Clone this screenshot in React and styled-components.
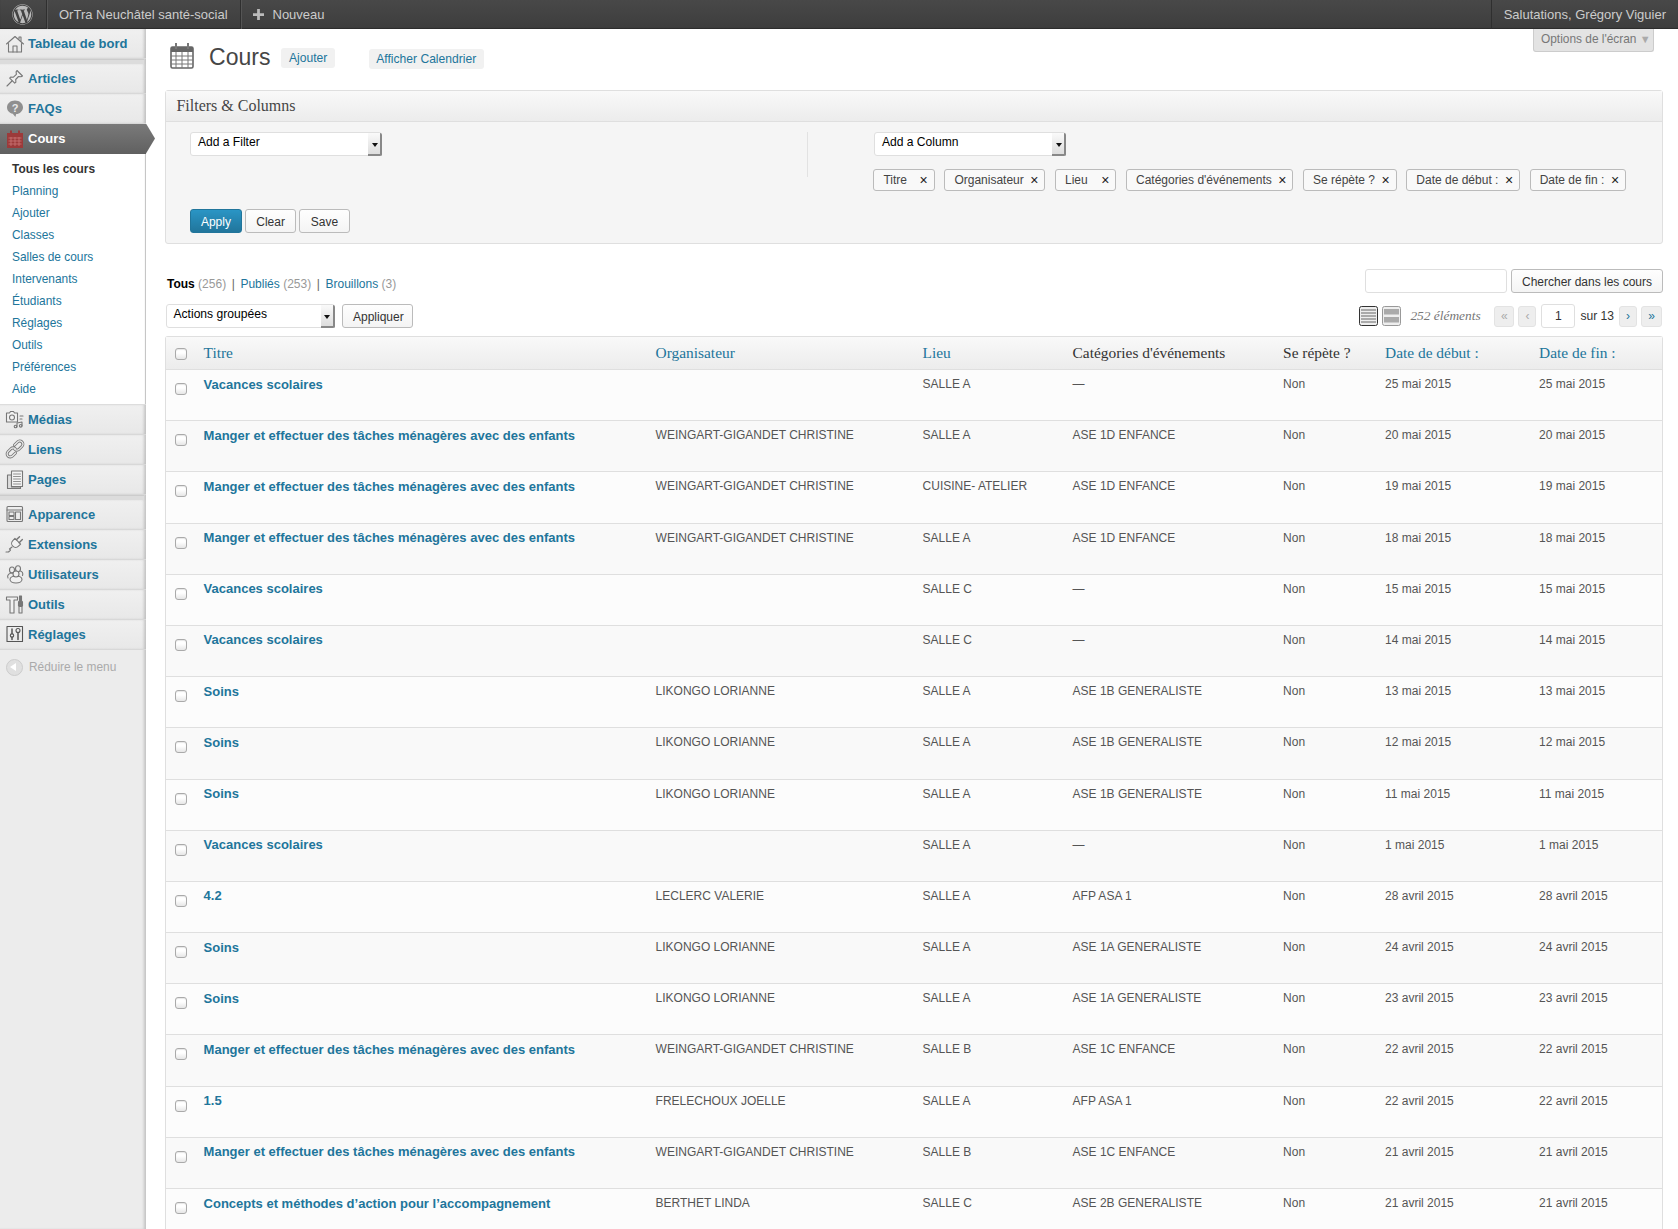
import React from "react";
import styled, { createGlobalStyle } from "styled-components";
import { FaWordpress } from "react-icons/fa";

const SANS = `"Liberation Sans", Arial, sans-serif`;
const SERIF = `"Liberation Serif", Georgia, serif`;
const LINK = "#21759b";

const stroke = { fill: "none", stroke: "#777", strokeWidth: 1.1, strokeLinejoin: "round", strokeLinecap: "round" };

// Menu icons, drawn by hand
const HomeIcon = () => (
  <svg width="20" height="20" viewBox="0 0 20 20">
    <g {...stroke}>
      <path d="M1.5 10 10 2.5l8.5 7.5" />
      <path d="M3.5 9.5v8.5h13V9.5" />
      <path d="M8 18v-6h4v6" />
      <path d="M14 5V3h2v4" />
    </g>
  </svg>
);
const PinIcon = () => (
  <svg width="20" height="20" viewBox="0 0 20 20">
    <g {...stroke}>
      <path d="M12 2.5 17.5 8l-1.5.8-2.5-.3-2.8 3 .2 2.7-1.2 1-5-5 1-1.2 2.7.2 3-2.8-.3-2.5z" fill="#eee" />
      <path d="M7 13 2 18" />
    </g>
  </svg>
);
const FaqIcon = () => (
  <svg width="20" height="20" viewBox="0 0 20 20">
    <path d="M10 2.500c4.400 0 8 2.900 8 6.800s-3.400 6.800-6.800 6.800l-.8 3-2.600-3.300C4.500 15.300 2 12.700 2 9.300c0-3.900 3.600-6.800 8-6.800z" fill="#8f8f8f" />
    <text x="10" y="13.500" textAnchor="middle" fontSize="11" fontWeight="700" fontFamily={SANS} fill="#e9e9e9">?</text>
  </svg>
);
const EventIcon = () => (
  <svg width="20" height="20" viewBox="0 0 20 20">
    <rect x="2" y="4" width="16" height="15" fill="#9c3a3a" />
    <rect x="5" y="1.500" width="2" height="4" fill="#9c3a3a" />
    <rect x="13" y="1.500" width="2" height="4" fill="#9c3a3a" />
    <path d="M3.500 9h13M3.500 12h13M3.500 15h13M6 8v9M10 8v9M14 8v9" stroke="#c77" strokeWidth=".8" fill="none" />
  </svg>
);
const MediaIcon = () => (
  <svg width="20" height="20" viewBox="0 0 20 20">
    <g {...stroke}>
      <path d="M1.500 4h3l1-1.500h3L9.500 4h3v9h-11z" fill="#f2f2f2" />
      <circle cx="7" cy="8.500" r="2.500" />
      <path d="M15 7h3M15 10h2M12 18v-4l5-1v4" />
      <circle cx="10.500" cy="17.500" r="1.300" />
      <circle cx="15.700" cy="16.800" r="1.300" />
    </g>
  </svg>
);
const CHAIN = "M9.500 6 12.500 3a3 3 0 0 1 4.500 4.300l-3 3a3 3 0 0 1-4.300 0M10.500 14 7.500 17A3 3 0 0 1 3 12.700l3-3a3 3 0 0 1 4.300 0";
const LinkIcon = () => (
  <svg width="20" height="20" viewBox="0 0 20 20">
    <path d={CHAIN} fill="none" stroke="#777" strokeWidth="3" strokeLinecap="round" />
    <path d={CHAIN} fill="none" stroke="#eee" strokeWidth="1.200" strokeLinecap="round" />
  </svg>
);
const PagesIcon = () => (
  <svg width="20" height="20" viewBox="0 0 20 20">
    <g {...stroke}>
      <path d="M2.500 6h4v12h9v1.500h-13z" fill="#ddd" />
      <rect x="6.500" y="2" width="11" height="15.500" fill="#f4f4f4" />
      <path d="M8.500 5h7M8.500 7.500h7M8.500 10h7M8.500 12.500h7M8.500 15h7" strokeWidth=".8" />
    </g>
  </svg>
);
const AppearanceIcon = () => (
  <svg width="20" height="20" viewBox="0 0 20 20">
    <g {...stroke}>
      <rect x="2" y="2.500" width="15.500" height="15" rx="1" />
      <path d="M2 6h15.500" />
      <rect x="4" y="8" width="5" height="3.500" />
      <rect x="4" y="12.500" width="5" height="3" />
      <rect x="10.500" y="8" width="5" height="7.500" />
    </g>
  </svg>
);
const PluginIcon = () => (
  <svg width="20" height="20" viewBox="0 0 20 20">
    <g {...stroke}>
      <g transform="rotate(45 11 9)">
        <path d="M7 6.500h8v3a4 4 0 0 1-8 0z" fill="#f2f2f2" />
        <path d="M9 6.500V2M13 6.500V2" strokeWidth="1.400" />
      </g>
      <path d="M7 13 4.500 15l1 1-2 2H1" />
    </g>
  </svg>
);
const UsersIcon = () => (
  <svg width="20" height="20" viewBox="0 0 20 20">
    <g {...stroke}>
      <ellipse cx="7" cy="6" rx="2.500" ry="3" />
      <ellipse cx="13" cy="4.800" rx="2.500" ry="3" />
      <path d="M3 14c-1.500-3 1.500-5 4-5s3 1 3 1" />
      <path d="M15.500 7c1.500.5 3 2 2 4.500" />
      <ellipse cx="11" cy="15.500" rx="6" ry="3.500" fill="#f0f0f0" />
      <ellipse cx="11" cy="10" rx="3" ry="3" fill="#f0f0f0" />
    </g>
  </svg>
);
const ToolsIcon = () => (
  <svg width="20" height="20" viewBox="0 0 20 20">
    <g {...stroke}>
      <path d="M1.500 3h11v3h-3.500v13h-4V6H1.500z" fill="#f0f0f0" />
      <path d="M14.500 2h2v5l1 1v4h-4V8l1-1z" fill="#777" />
      <path d="M14 12.500h3v6.500h-3z" />
    </g>
  </svg>
);
const SettingsIcon = () => (
  <svg width="20" height="20" viewBox="0 0 20 20">
    <g {...stroke} stroke="#555">
      <rect x="2" y="2.500" width="15.500" height="15" />
      <path d="M7 5v5M7 13v2.500M13 9v6.500" strokeWidth="1.500" />
      <circle cx="7" cy="11.500" r="1.700" />
      <circle cx="13" cy="6.500" r="2" />
    </g>
  </svg>
);

const CalendarIcon = () => (
  <svg width="24" height="26" viewBox="0 0 24 26">
    <rect x="1" y="4" width="22" height="21" rx="1.500" fill="#fff" stroke="#666" strokeWidth="1.600" />
    <rect x="1" y="4" width="22" height="5" fill="#666" />
    <rect x="5" y="0" width="2" height="6" fill="#777" />
    <rect x="17" y="0" width="2" height="6" fill="#777" />
    <path d="M1 13h22M1 17h22M1 21h22M6 9v16M12 9v16M18 9v16" stroke="#777" strokeWidth="1" />
  </svg>
);

const ListViewIcon = () => (
  <svg width="19" height="20" viewBox="0 0 19 20">
    <rect x=".5" y=".5" width="18" height="19" rx="2" fill="#eee" stroke="#333" />
    <path d="M2 4h15M2 7h15M2 10h15M2 13h15M2 16h15" stroke="#666" strokeWidth="1.200" />
  </svg>
);
const ExcerptViewIcon = () => (
  <svg width="19" height="20" viewBox="0 0 19 20">
    <rect x=".5" y=".5" width="18" height="19" rx="2" fill="#eee" stroke="#999" />
    <rect x="2" y="3" width="15" height="5.500" fill="#aaa" />
    <rect x="2" y="11" width="15" height="5.500" fill="#aaa" />
  </svg>
);

const menuTop = [{ label: "Tableau de bord", Icon: HomeIcon }];
const menuContent = [
  { label: "Articles", Icon: PinIcon },
  { label: "FAQs", Icon: FaqIcon },
];
const subLinks = ["Planning", "Ajouter", "Classes", "Salles de cours", "Intervenants", "Étudiants", "Réglages", "Outils", "Préférences", "Aide"];
const menuMiddle = [
  { label: "Médias", Icon: MediaIcon },
  { label: "Liens", Icon: LinkIcon },
  { label: "Pages", Icon: PagesIcon },
];
const menuBottom = [
  { label: "Apparence", Icon: AppearanceIcon },
  { label: "Extensions", Icon: PluginIcon },
  { label: "Utilisateurs", Icon: UsersIcon },
  { label: "Outils", Icon: ToolsIcon },
  { label: "Réglages", Icon: SettingsIcon },
];

const tags = ["Titre", "Organisateur", "Lieu", "Catégories d'événements", "Se répète ?", "Date de début :", "Date de fin :"];

const MANGER = "Manger et effectuer des tâches ménagères avec des enfants";
const WEIN = "WEINGART-GIGANDET CHRISTINE";
const LIK = "LIKONGO LORIANNE";
const rows = [
  ["Vacances scolaires", "", "SALLE A", "—", "25 mai 2015"],
  [MANGER, WEIN, "SALLE A", "ASE 1D ENFANCE", "20 mai 2015"],
  [MANGER, WEIN, "CUISINE- ATELIER", "ASE 1D ENFANCE", "19 mai 2015"],
  [MANGER, WEIN, "SALLE A", "ASE 1D ENFANCE", "18 mai 2015"],
  ["Vacances scolaires", "", "SALLE C", "—", "15 mai 2015"],
  ["Vacances scolaires", "", "SALLE C", "—", "14 mai 2015"],
  ["Soins", LIK, "SALLE A", "ASE 1B GENERALISTE", "13 mai 2015"],
  ["Soins", LIK, "SALLE A", "ASE 1B GENERALISTE", "12 mai 2015"],
  ["Soins", LIK, "SALLE A", "ASE 1B GENERALISTE", "11 mai 2015"],
  ["Vacances scolaires", "", "SALLE A", "—", "1 mai 2015"],
  ["4.2", "LECLERC VALERIE", "SALLE A", "AFP ASA 1", "28 avril 2015"],
  ["Soins", LIK, "SALLE A", "ASE 1A GENERALISTE", "24 avril 2015"],
  ["Soins", LIK, "SALLE A", "ASE 1A GENERALISTE", "23 avril 2015"],
  [MANGER, WEIN, "SALLE B", "ASE 1C ENFANCE", "22 avril 2015"],
  ["1.5", "FRELECHOUX JOELLE", "SALLE A", "AFP ASA 1", "22 avril 2015"],
  [MANGER, WEIN, "SALLE B", "ASE 1C ENFANCE", "21 avril 2015"],
  ["Concepts et méthodes d’action pour l’accompagnement", "BERTHET LINDA", "SALLE C", "ASE 2B GENERALISTE", "21 avril 2015"],
];

function MenuGroup({ items }) {
  return items.map(({ label, Icon }) => (
    <MenuItem key={label}>
      <MenuIcon>
        <Icon />
      </MenuIcon>
      {label}
    </MenuItem>
  ));
}

function FakeSelect({ label, width }) {
  return (
    <SelectBox $width={width}>
      {label}
      <SelectArrow />
    </SelectBox>
  );
}

export default function App() {
  return (
    <>
      <GlobalStyle />
      <AdminBar>
        <BarItem $width={46.5} $center>
          <FaWordpress size={21} color="#bbb" />
        </BarItem>
        <BarItem $width={194}>OrTra Neuchâtel santé-social</BarItem>
        <BarItem>
          <svg width="11" height="11" viewBox="0 0 12 12">
            <path d="M4.500 0h3v4.500H12v3H7.500V12h-3V7.500H0v-3h4.500z" fill="#bbb" />
          </svg>
          <span>Nouveau</span>
        </BarItem>
        <BarSpacer />
        <BarAccount>Salutations, Grégory Viguier</BarAccount>
      </AdminBar>
      <Shell>
        <Sidebar>
          <MenuGroup items={menuTop} />
          <MenuSeparator />
          <MenuGroup items={menuContent} />
          <MenuItem $active>
            <MenuIcon>
              <EventIcon />
            </MenuIcon>
            Cours
          </MenuItem>
          <SubMenu>
            <SubLink $current>Tous les cours</SubLink>
            {subLinks.map((s) => (
              <SubLink key={s}>{s}</SubLink>
            ))}
          </SubMenu>
          <MenuGroup items={menuMiddle} />
          <MenuSeparator $tall />
          <MenuGroup items={menuBottom} />
          <Collapse>
            <CollapseDot />
            Réduire le menu
          </Collapse>
        </Sidebar>
        <Main>
          <ScreenOptions>
            Options de l'écran <small>▼</small>
          </ScreenOptions>
          <TitleRow>
            <TitleIcon>
              <CalendarIcon />
            </TitleIcon>
            <PageTitle>Cours</PageTitle>
            <AddNew>Ajouter</AddNew>
            <AddNew $wide>Afficher Calendrier</AddNew>
          </TitleRow>

          <Panel>
            <PanelHead>Filters &amp; Columns</PanelHead>
            <PanelBody>
              <FilterSide>
                <FakeSelect label="Add a Filter" width={192} />
              </FilterSide>
              <ColumnSide>
                <FakeSelect label="Add a Column" width={192} />
                <TagList>
                  {tags.map((t) => (
                    <Tag key={t}>
                      {t}
                      <TagClose>×</TagClose>
                    </Tag>
                  ))}
                </TagList>
              </ColumnSide>
              <PanelActions>
                <Button $primary>Apply</Button>
                <Button>Clear</Button>
                <Button>Save</Button>
              </PanelActions>
            </PanelBody>
          </Panel>

          <StatusBar>
            <Status>
              <b>Tous</b> <Count>(256)</Count>
              <Sep>|</Sep>
              <a>Publiés</a> <Count>(253)</Count>
              <Sep>|</Sep>
              <a>Brouillons</a> <Count>(3)</Count>
            </Status>
            <SearchBox>
              <SearchInput />
              <Button $search>Chercher dans les cours</Button>
            </SearchBox>
          </StatusBar>

          <ActionBar>
            <FakeSelect label="Actions groupées" width={169} />
            <Button $apply>Appliquer</Button>
            <Pager>
              <ListViewIcon />
              <ExcerptViewIcon />
              <ItemCount>252 éléments</ItemCount>
              <PageBtn $off $width={20}>«</PageBtn>
              <PageBtn $off $width={18}>‹</PageBtn>
              <PageInput defaultValue="1" />
              <PageOf>sur 13</PageOf>
              <PageBtn $width={18}>›</PageBtn>
              <PageBtn $width={21}>»</PageBtn>
            </Pager>
          </ActionBar>

          <Table>
            <HeadRow>
              <CheckCell $head>
                <Check type="checkbox" />
              </CheckCell>
              <HeadCell $link>Titre</HeadCell>
              <HeadCell $link>Organisateur</HeadCell>
              <HeadCell $link>Lieu</HeadCell>
              <HeadCell>Catégories d'événements</HeadCell>
              <HeadCell>Se répète ?</HeadCell>
              <HeadCell $link>Date de début :</HeadCell>
              <HeadCell $link>Date de fin :</HeadCell>
            </HeadRow>
            {rows.map(([title, org, place, cat, date], i) => (
              <Row key={i} $odd={i % 2 === 0}>
                <CheckCell>
                  <Check type="checkbox" />
                </CheckCell>
                <RowTitle>{title}</RowTitle>
                <Cell>{org}</Cell>
                <Cell>{place}</Cell>
                <Cell>{cat}</Cell>
                <Cell>Non</Cell>
                <Cell>{date}</Cell>
                <Cell>{date}</Cell>
              </Row>
            ))}
          </Table>
        </Main>
      </Shell>
    </>
  );
}

// Styles
const GlobalStyle = createGlobalStyle`
  html, body {
    margin: 0;
    height: 1229px;
    overflow: hidden;
    background: #fff;
    font-family: ${SANS};
    font-size: 12.85px;
    color: #333;
  }
`;

const AdminBar = styled.header`
  display: flex;
  height: 29px;
  background: linear-gradient(#484848, #3d3d3d);
  box-shadow: inset 0 -1px 1px rgba(0, 0, 0, 0.3);
  color: #ccc;
  font-size: 13px;
  white-space: nowrap;
`;

const BarItem = styled.div`
  display: flex;
  align-items: center;
  justify-content: ${(p) => (p.$center ? "center" : "flex-start")};
  width: ${(p) => (p.$width ? `${p.$width}px` : "auto")};
  box-sizing: border-box;
  padding: ${(p) => (p.$center ? "0" : "0 12.5px")};
  gap: 8.5px;
  border-right: 1px solid #2f2f2f;
  box-shadow: 1px 0 0 #555;

  &:nth-child(3) {
    border-right: 0;
    box-shadow: none;
  }
`;

const BarSpacer = styled.div`
  flex: 1;
`;

const BarAccount = styled.div`
  display: flex;
  align-items: center;
  padding: 0 12px;
  border-left: 1px solid #2f2f2f;
`;

const Shell = styled.div`
  display: flex;
  align-items: stretch;
  height: 1200px;
`;

const Sidebar = styled.aside`
  flex: 0 0 146px;
  width: 146px;
  background: #ececec;
  box-shadow: inset -3px 0 3px -1px rgba(0, 0, 0, 0.18);
`;

const MenuItem = styled.div`
  position: relative;
  display: flex;
  align-items: center;
  box-sizing: border-box;
  height: 30px;
  font-size: 13px;
  font-weight: 700;
  color: ${(p) => (p.$active ? "#fff" : LINK)};
  background: ${(p) => (p.$active ? "linear-gradient(#7a7a7a, #606060)" : "linear-gradient(#f0f0f0, #e8e8e8)")};
  border-bottom: ${(p) => (p.$active ? "0" : "1px solid #d8d8d8")};
  box-shadow: ${(p) => (p.$active ? "none" : "inset -3px 0 3px -1px rgba(0, 0, 0, 0.18)")};

  ${(p) =>
    p.$active &&
    `&::after {
      content: "";
      position: absolute;
      left: 146px;
      top: 0;
      width: 9px;
      height: 30px;
      background: linear-gradient(#7a7a7a, #606060);
      clip-path: polygon(0 0, 100% 50%, 0 100%);
    }`}
`;

const MenuIcon = styled.span`
  display: flex;
  justify-content: center;
  flex: 0 0 28px;
  width: 28px;
  padding-left: 2px;
  box-sizing: border-box;
`;

const MenuSeparator = styled.div`
  height: ${(p) => (p.$tall ? "5px" : "4.5px")};
  background: #dcdcdc;
  border-top: 1px solid #ccc;
  box-sizing: border-box;
  margin-right: 2px;
`;

const SubMenu = styled.div`
  display: flex;
  flex-direction: column;
  background: #fff;
  padding: 4px 0 5px 12px;
  height: 251px;
  box-sizing: border-box;
  border-bottom: 1px solid #ddd;
  box-shadow: inset -2px 0 1px -1px rgba(0, 0, 0, 0.25);
`;

const SubLink = styled.a`
  height: 22px;
  line-height: 22px;
  font-size: 11.9px;
  font-weight: ${(p) => (p.$current ? 700 : 400)};
  color: ${(p) => (p.$current ? "#333" : LINK)};
`;

const Collapse = styled.div`
  display: flex;
  align-items: center;
  gap: 6px;
  height: 35px;
  padding-left: 6px;
  font-size: 11.9px;
  color: #aaa;
`;

const CollapseDot = styled.span`
  position: relative;
  display: inline-block;
  width: 15px;
  height: 15px;
  border-radius: 50%;
  background: #e0e0e0;
  border: 1px solid #ccc;

  &::before {
    content: "";
    position: absolute;
    left: 3px;
    top: 3.500px;
    border: 4px solid transparent;
    border-right: 6px solid #fff;
    border-left: 0;
  }
`;

const Main = styled.main`
  position: relative;
  flex: 1;
  min-width: 0;
  padding: 0 15px 0 19.4px;
`;

const ScreenOptions = styled.div`
  position: absolute;
  top: 0;
  right: 24px;
  width: 121px;
  height: 23px;
  box-sizing: border-box;
  padding-left: 7px;
  line-height: 21px;
  background: #e3e3e3;
  border: 1px solid #ccc;
  border-top: 0;
  border-radius: 0 0 3px 3px;
  font-size: 11.9px;
  color: #777;

  small {
    font-size: 11px;
    color: #aaa;
  }
`;

const TitleRow = styled.div`
  display: flex;
  align-items: flex-start;
  height: 61px;
`;

const TitleIcon = styled.span`
  display: block;
  margin: 14px 0 0 5px;
`;

const PageTitle = styled.h2`
  margin: 13px 0 0 14.7px;
  font-size: 23px;
  font-weight: 400;
  line-height: 30px;
  color: #464646;
`;

const AddNew = styled.a`
  margin: ${(p) => (p.$wide ? "19.500px 0 0 34px" : "18.500px 0 0 11px")};
  padding: 0 7.500px;
  height: 20px;
  line-height: 20px;
  font-size: 12.1px;
  color: ${LINK};
  background: #f1f1f1;
  border-radius: 3px;
`;

const Panel = styled.section`
  background: #f5f5f5;
  border: 1px solid #dfdfdf;
  border-radius: 3px;
  height: 154px;
  box-sizing: border-box;
`;

const PanelHead = styled.h3`
  margin: 0;
  height: 31px;
  box-sizing: border-box;
  padding-left: 10px;
  line-height: 29px;
  font-family: ${SERIF};
  font-size: 16px;
  font-weight: 400;
  color: #464646;
  background: linear-gradient(#f9f9f9, #ececec);
  border-bottom: 1px solid #dfdfdf;
`;

const PanelBody = styled.div`
  display: grid;
  grid-template-columns: 618px 1fr;
  grid-template-rows: 77px auto;
  padding: 10px 0 0 24px;
`;

const FilterSide = styled.div`
  height: 45px;
  border-right: 1px solid #e2e2e2;
`;

const ColumnSide = styled.div`
  display: flex;
  flex-direction: column;
  gap: 13px;
  padding-left: 66px;
`;

const SelectBox = styled.div`
  position: relative;
  box-sizing: border-box;
  width: ${(p) => p.$width}px;
  height: 24px;
  padding: 1px 6.500px;
  line-height: 17px;
  background: #fff;
  border: 1px solid #dfdfdf;
  border-radius: 3px;
  color: #000;
  font-size: 12.1px;
`;

const SelectArrow = styled.i`
  position: absolute;
  top: 0;
  right: -1px;
  bottom: -1px;
  width: 14px;
  background: linear-gradient(#fafafa, #ddd);
  border-right: 2px solid #888;
  border-bottom: 2px solid #888;
  border-radius: 0 2px 2px 0;
  box-sizing: border-box;

  &::after {
    content: "";
    position: absolute;
    left: 3.500px;
    top: 10px;
    border: 3px solid transparent;
    border-top: 4px solid #111;
    border-bottom: 0;
  }
`;

const TagList = styled.div`
  display: flex;
  gap: 9.600px;
  margin-left: -1px;
`;

const Tag = styled.div`
  display: flex;
  align-items: center;
  justify-content: space-between;
  gap: 6.500px;
  box-sizing: border-box;
  min-width: 61.400px;
  height: 21.500px;
  padding: 0 6px 0 9px;
  background: #f9f9f9;
  border: 1px solid #bbb;
  border-radius: 3px;
  font-size: 12px;
  color: #444;
  white-space: nowrap;
`;

const TagClose = styled.span`
  font-size: 14px;
  color: #222;
`;

const PanelActions = styled.div`
  grid-column: 1 / -1;
  display: flex;
  gap: 3.300px;
  margin-left: -0.5px;
`;

const Button = styled.button`
  box-sizing: border-box;
  width: ${(p) => (p.$search ? "152px" : p.$apply ? "71.500px" : "auto")};
  min-width: 50.500px;
  height: 24px;
  padding: 1px ${(p) => (p.$search ? "0" : "10px")} 0;
  margin-left: ${(p) => (p.$apply ? "7px" : "0")};
  font-family: ${SANS};
  font-size: 12px;
  white-space: nowrap;
  border-radius: 3px;
  border: 1px solid ${(p) => (p.$primary ? "#21759b" : "#bbb")};
  color: ${(p) => (p.$primary ? "#fff" : "#333")};
  background: ${(p) => (p.$primary ? "linear-gradient(#2a95c5, #21759b)" : "linear-gradient(#fefefe, #f4f4f4)")};
`;

const StatusBar = styled.div`
  display: flex;
  justify-content: space-between;
  align-items: flex-start;
  margin-top: 25px;
  height: 35px;
`;

const Status = styled.div`
  margin: 7px 0 0 1.6px;
  font-size: 12px;
  line-height: 16px;
  color: #21759b;

  b {
    color: #000;
  }
`;

const Count = styled.span`
  color: #999;
`;

const Sep = styled.span`
  margin: 0 5.600px;
  color: #666;
`;

const SearchBox = styled.div`
  display: flex;
  gap: 4.500px;
`;

const SearchInput = styled.input`
  box-sizing: border-box;
  width: 142px;
  height: 24px;
  border: 1px solid #dfdfdf;
  border-radius: 3px;
  outline: 0;
`;

const ActionBar = styled.div`
  display: flex;
  align-items: flex-start;
  height: 32px;
  padding-left: 0.6px;
`;

const Pager = styled.div`
  display: flex;
  align-items: center;
  margin: 0 1px 0 auto;
  height: 24px;
  gap: 4px;
`;

const ItemCount = styled.span`
  margin: 0 10px 0 5px;
  width: 70px;
  font-family: ${SERIF};
  font-style: italic;
  font-size: 13.4px;
  color: #777;
  white-space: nowrap;
`;

const PageBtn = styled.a`
  width: ${(p) => p.$width}px;
  height: 21px;
  line-height: 19px;
  text-align: center;
  background: #eee;
  border: 1px solid #e3e3e3;
  border-radius: 3px;
  box-sizing: border-box;
  font-size: 12px;
  color: ${(p) => (p.$off ? "#aaa" : LINK)};
`;

const PageInput = styled.input`
  box-sizing: border-box;
  width: 34px;
  height: 24px;
  margin-left: 1px;
  text-align: center;
  padding: 0;
  font-family: ${SANS};
  font-size: 12.1px;
  border: 1px solid #dfdfdf;
  border-radius: 3px;
  outline: 0;
  color: #333;
`;

const PageOf = styled.span`
  font-size: 12.1px;
  margin: 0 1px;
`;

const Table = styled.div`
  border: 1px solid #dfdfdf;
  border-bottom: 0;
  border-radius: 3px 3px 0 0;
  box-sizing: border-box;
`;

const COLUMNS = "37.2px 452px 267px 150px 210.5px 102px 154px 1fr";

const HeadRow = styled.div`
  display: grid;
  grid-template-columns: ${COLUMNS};
  align-items: center;
  height: 33px;
  box-sizing: border-box;
  background: linear-gradient(#f9f9f9, #ececec);
  border-bottom: 1px solid #dfdfdf;
`;

const HeadCell = styled.div`
  font-family: ${SERIF};
  font-size: 15.4px;
  color: ${(p) => (p.$link ? LINK : "#333")};
  white-space: nowrap;
`;

const Row = styled.div`
  display: grid;
  grid-template-columns: ${COLUMNS};
  height: 51.200px;
  box-sizing: border-box;
  background: ${(p) => (p.$odd ? "#fcfcfc" : "#f9f9f9")};
  border-bottom: 1px solid #dfdfdf;
`;

const CheckCell = styled.div`
  display: flex;
  padding: ${(p) => (p.$head ? "2px 0 0 8.500px" : "13px 0 0 8.500px")};
  align-items: ${(p) => (p.$head ? "center" : "flex-start")};
`;

const Check = styled.input`
  appearance: none;
  margin: 0;
  width: 12px;
  height: 12px;
  border: 1px solid #aaa;
  border-radius: 3px;
  background: linear-gradient(#fff 40%, #e6e6e6);
  box-shadow: inset 0 1px 1px rgba(0, 0, 0, 0.1);
`;

const Cell = styled.div`
  padding-top: 6px;
  line-height: 16px;
  font-size: 12px;
  color: #555;
  white-space: nowrap;
`;

const RowTitle = styled.a`
  padding-top: 6.5px;
  line-height: 16px;
  font-size: 13px;
  font-weight: 700;
  color: ${LINK};
  white-space: nowrap;
`;
